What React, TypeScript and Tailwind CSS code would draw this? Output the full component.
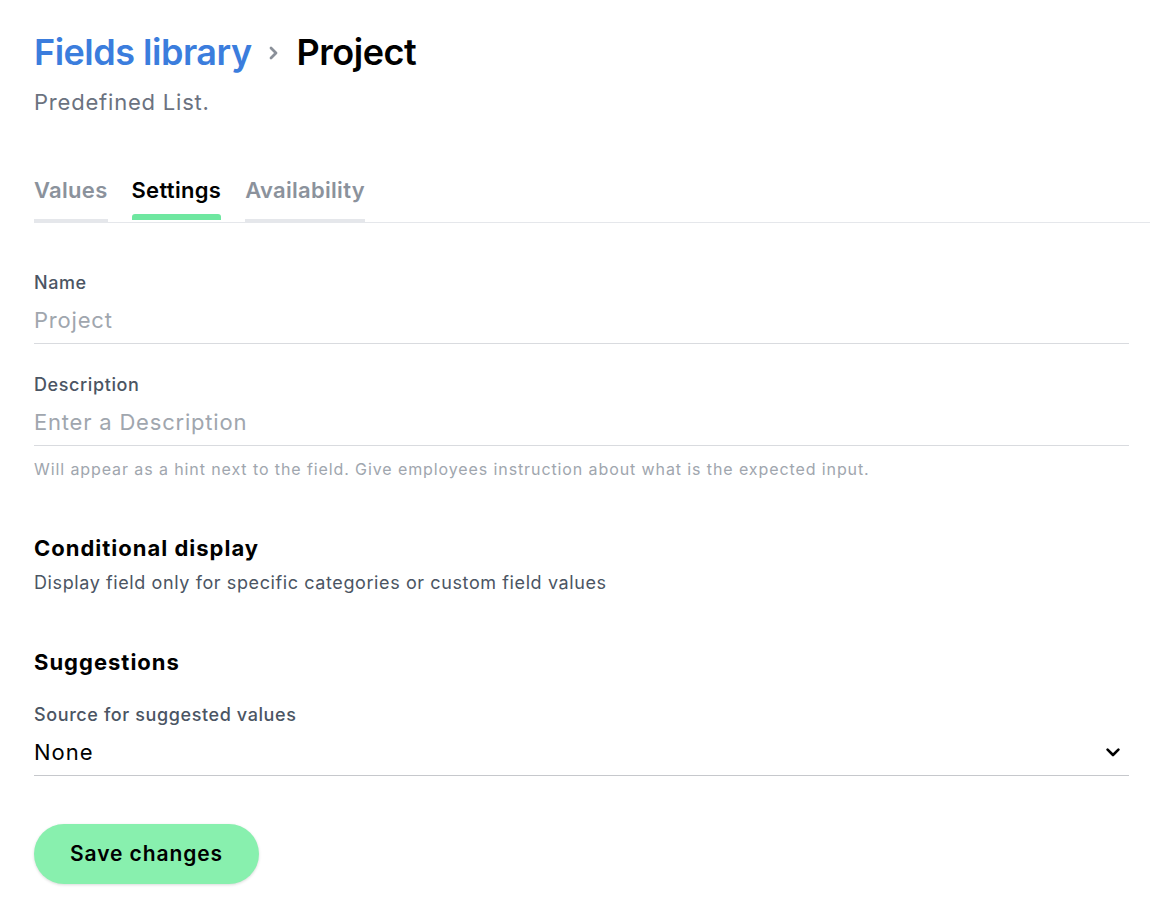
import React from "react";

export default function App() {
  return (
    <div className="min-h-[914px] w-[1150px] bg-white font-['Inter',sans-serif] overflow-hidden">
      <div className="pl-[34px] pt-[28px]">
        <div className="flex items-center h-[48px]">
          <span className="text-[36px] font-semibold text-[#3b7ddd] tracking-[-0.5px]">Fields library</span>
          <svg className="ml-[17px] mr-[19px] mt-[2px]" width="9" height="14" viewBox="0 0 9 14" fill="none" stroke="#8a9099" strokeWidth="2.8" strokeLinecap="round" strokeLinejoin="round"><path d="M2 2l5 5-5 5" /></svg>
          <span className="text-[36px] font-semibold text-black tracking-[-0.5px]">Project</span>
        </div>
        <div className="mt-[12px] text-[22px] text-[#6b7280] leading-[28px] tracking-[0.8px]">Predefined List.</div>

        <div className="mt-[60px] flex items-end gap-[24px] border-b border-[#e5e7eb] text-[22px] font-semibold leading-[28px] tracking-[0.3px]">
          <div className="pb-[15px] border-b-[3px] border-[#e5e7eb] text-[#8b929c]">Values</div>
          <div className="relative pb-[15px] border-b-[3px] border-transparent text-black">
            Settings
            <div className="absolute left-0 right-0 -bottom-[1px] h-[6px] rounded-t-[3px] bg-[#6ee7a0]"></div>
          </div>
          <div className="pb-[15px] border-b-[3px] border-[#e5e7eb] text-[#8b929c]">Availability</div>
        </div>

        <div className="w-[1095px]">
          <div className="mt-[49px] text-[18px] font-medium text-[#4b5563] leading-[22px] tracking-[0.6px]">Name</div>
          <div className="mt-[12px] pb-[9px] border-b border-[#d9dbdf] text-[22px] text-[#a0a6ae] leading-[28px] tracking-[0.8px]">Project</div>

          <div className="mt-[30px] text-[18px] font-medium text-[#4b5563] leading-[22px] tracking-[0.6px]">Description</div>
          <div className="mt-[12px] pb-[9px] border-b border-[#d9dbdf] text-[22px] text-[#a0a6ae] leading-[28px] tracking-[0.8px]">Enter a Description</div>
          <div className="mt-[13px] text-[16px] text-[#a0a6ae] leading-[20px] tracking-[0.9px]">Will appear as a hint next to the field. Give employees instruction about what is the expected input.</div>

          <div className="mt-[55px] text-[22px] font-bold text-black leading-[28px] tracking-[1px]">Conditional display</div>
          <div className="mt-[9px] text-[18px] text-[#4b5563] leading-[24px] tracking-[0.6px]">Display field only for specific categories or custom field values</div>

          <div className="mt-[53px] text-[22px] font-bold text-black leading-[28px] tracking-[1px]">Suggestions</div>
          <div className="mt-[28px] text-[18px] font-medium text-[#4b5563] leading-[22px] tracking-[0.6px]">Source for suggested values</div>
          <div className="mt-[12px] pb-[9px] border-b border-[#c6c8cc] flex items-center justify-between">
            <span className="text-[22px] text-black leading-[28px] tracking-[1px]">None</span>
            <svg className="mr-[9px]" width="14" height="9" viewBox="0 0 14 9" fill="none" stroke="#000" strokeWidth="2.6" strokeLinecap="round" strokeLinejoin="round"><path d="M1.6 1.6L7 7l5.4-5.4" /></svg>
          </div>

          <button className="mt-[48px] w-[225px] h-[60px] rounded-full bg-[#88f0ae] shadow-[0_1px_3px_rgba(0,0,0,0.15)] text-[21px] font-semibold text-black tracking-[0.9px]">Save changes</button>
        </div>
      </div>
    </div>
  );
}
